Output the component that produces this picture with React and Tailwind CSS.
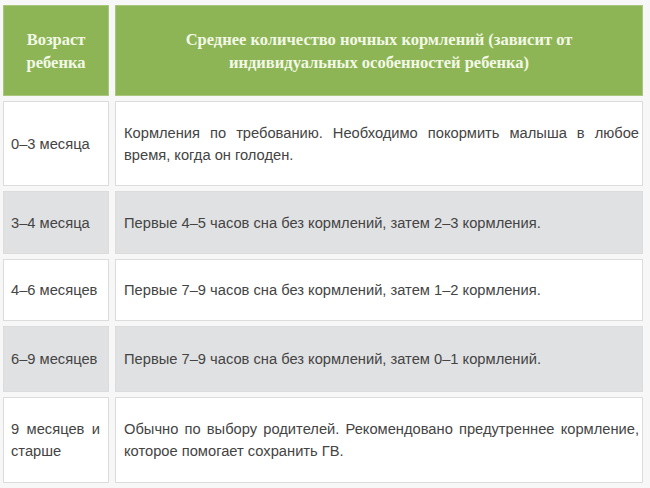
import React from "react";

const rows = [
  { age: "0–3 месяца", text: "Кормления по требованию. Необходимо покормить малыша в любое время, когда он голоден.", h: "h-[85px]", gray: false },
  { age: "3–4 месяца", text: "Первые 4–5 часов сна без кормлений, затем 2–3 кормления.", h: "h-[63px]", gray: true },
  { age: "4–6 месяцев", text: "Первые 7–9 часов сна без кормлений, затем 1–2 кормления.", h: "h-[62px]", gray: false },
  { age: "6–9 месяцев", text: "Первые 7–9 часов сна без кормлений, затем 0–1 кормлений.", h: "h-[66px]", gray: true },
  { age: "9 месяцев и старше", text: "Обычно по выбору родителей. Рекомендовано предутреннее кормление, которое помогает сохранить ГВ.", h: "h-[86px]", gray: false },
];

export default function App() {
  return (
    <div className="w-[650px] h-[488px] bg-[#f7f7f7] pt-[5px] pl-[3px] pr-[7px] flex flex-col gap-[5px] overflow-hidden">
      {/* header */}
      <div className="grid grid-cols-[106px_1fr] gap-[6px] h-[91px]">
        <div className="bg-[#8db556] border border-[#a9c77c] flex items-center justify-center text-center text-[#f3f8e6] font-bold text-[16.5px] leading-[23px] font-['Liberation_Serif',serif]">
          Возраст<br />ребенка
        </div>
        <div className="bg-[#8db556] border border-[#a9c77c] flex items-center justify-center text-center text-[#f3f8e6] font-bold text-[16.5px] leading-[23px] font-['Liberation_Serif',serif] px-[40px]">
          Среднее количество ночных кормлений (зависит от индивидуальных особенностей ребенка)
        </div>
      </div>

      {rows.map((r) => (
        <div key={r.age} className={`grid grid-cols-[106px_1fr] gap-[6px] ${r.h}`}>
          <div className={`${r.gray ? "bg-[#e0e1e3]" : "bg-white"} border border-[#dcdcdc] flex items-center pl-[7px] pr-[8px] text-[14.7px] leading-[22px] text-[#444] font-['Liberation_Sans',Arial,sans-serif] text-justify`}>
            <span className="w-full">{r.age}</span>
          </div>
          <div className={`${r.gray ? "bg-[#e0e1e3]" : "bg-white"} border border-[#dcdcdc] flex items-center pl-[8px] pr-[3px] text-[14.7px] leading-[22px] text-[#444] font-['Liberation_Sans',Arial,sans-serif] text-justify`}>
            <span className="w-full">{r.text}</span>
          </div>
        </div>
      ))}
    </div>
  );
}
